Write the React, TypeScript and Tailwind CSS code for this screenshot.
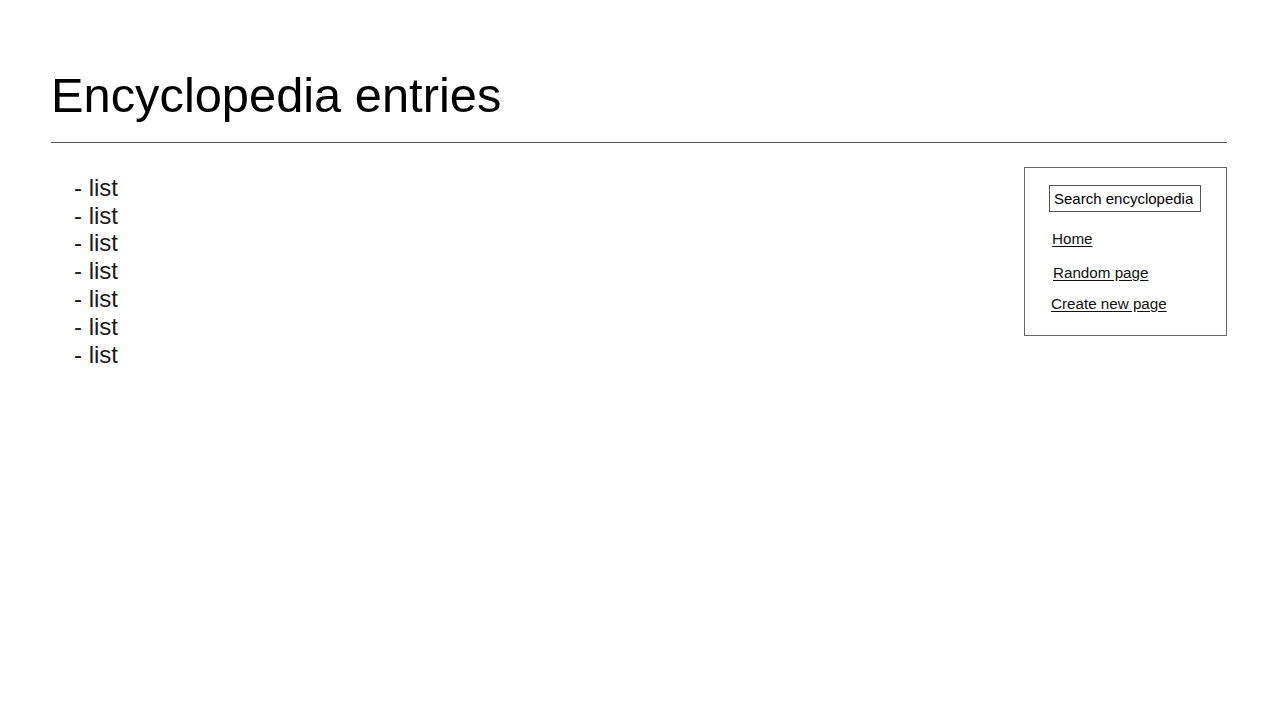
const entries = ["list", "list", "list", "list", "list", "list", "list"];

export default function App() {
  return (
    <main className="min-h-[720px] bg-white pl-[51px] pr-[53px] pt-[71px] font-['Liberation_Sans',Arial,sans-serif] text-black">
      <h1 className="text-[48.8px] leading-none font-normal">Encyclopedia entries</h1>
      <hr className="mt-[22px] border-0 border-t border-[#555]" />

      <section className="flex items-start justify-between">
        <ul className="mt-[31px] pl-[23px] text-[24px] leading-[27.8px] text-[#1c1c1c]">
          {entries.map((item, i) => (
            <li key={i}>- {item}</li>
          ))}
        </ul>

        <aside className="mt-[24px] w-[203px] border border-[#666] px-[24px] pt-[17px] pb-[22px]">
          <div className="h-[27px] w-[152px] border border-[#555] pl-[4px] text-[15px] leading-[25px] text-black">
            Search encyclopedia
          </div>
          <a href="#" className="mt-[18px] ml-[3px] block text-[15.2px] leading-[18px] text-[#111] underline underline-offset-2">
            Home
          </a>
          <a href="#" className="mt-[16px] ml-[4px] block text-[15.2px] leading-[18px] text-[#111] underline underline-offset-2">
            Random page
          </a>
          <a href="#" className="mt-[13px] ml-[2px] block text-[15.2px] leading-[18px] text-[#111] underline underline-offset-2">
            Create new page
          </a>
        </aside>
      </section>
    </main>
  );
}
